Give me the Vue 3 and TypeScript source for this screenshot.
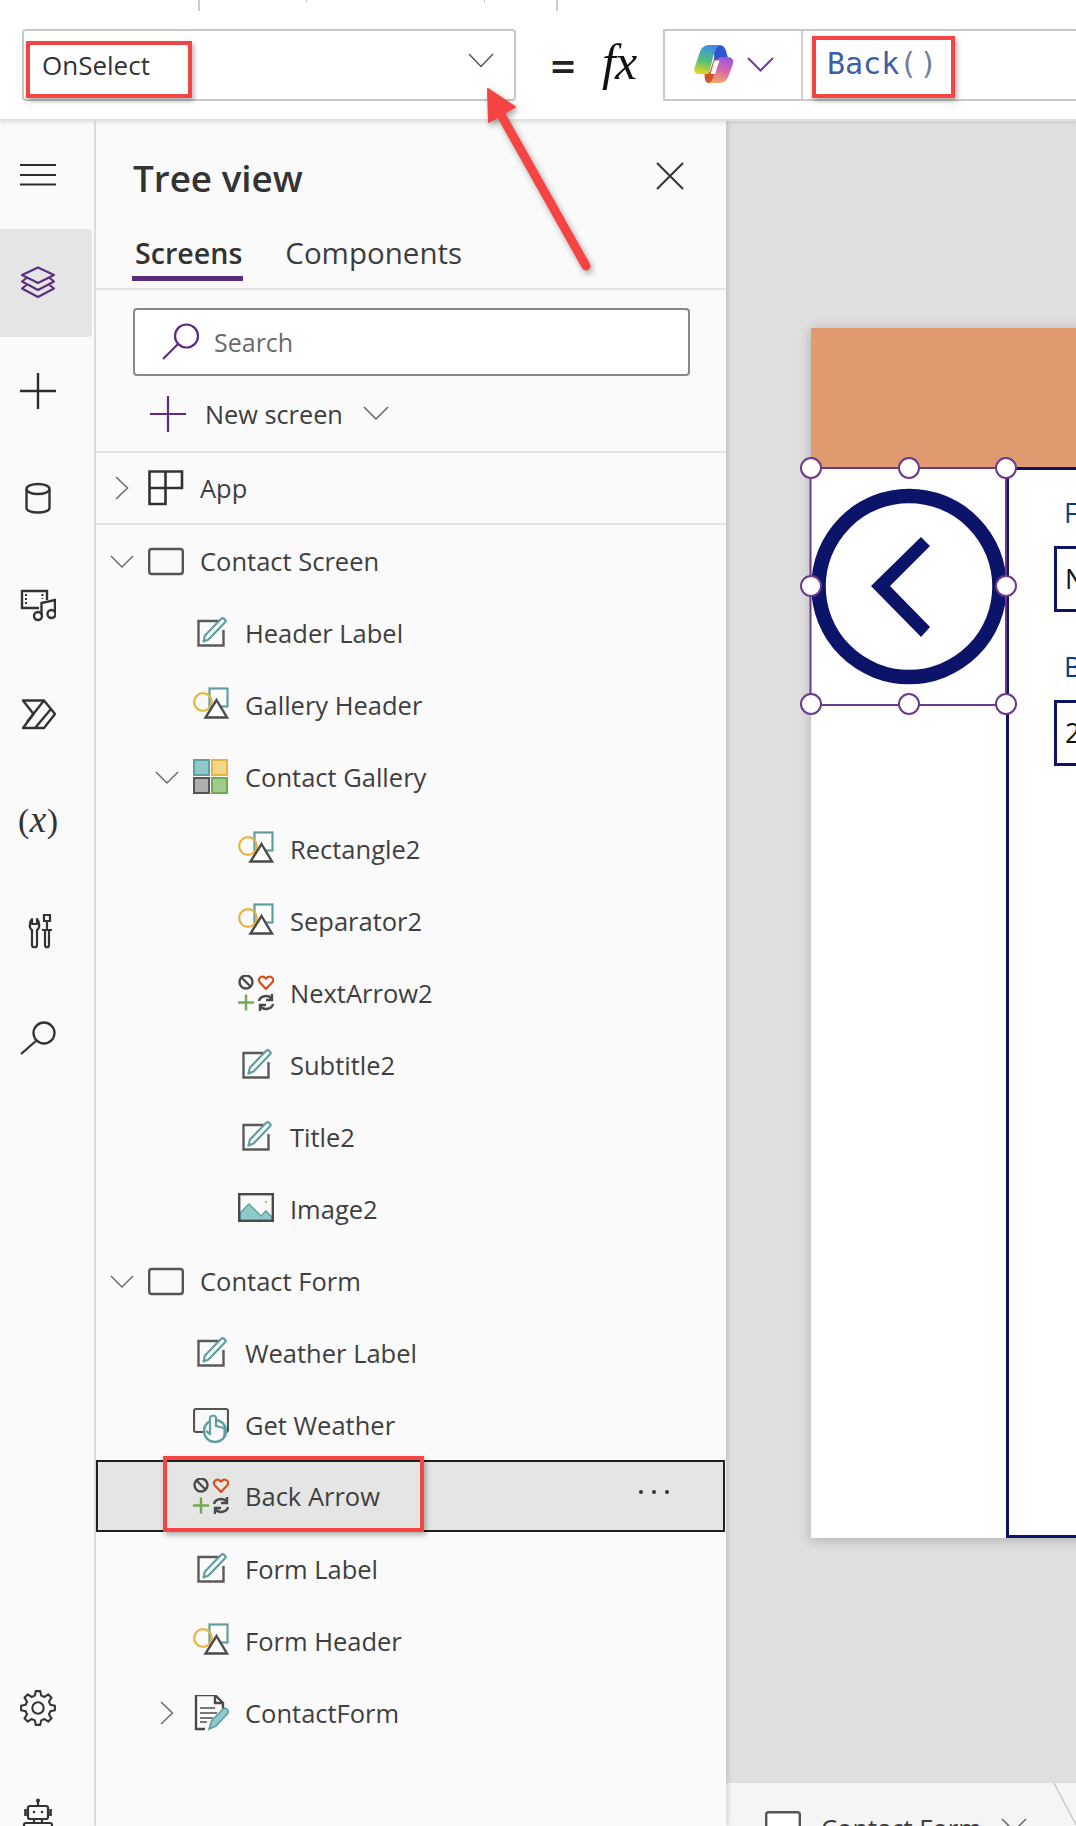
<script setup lang="ts">
type TreeRow = {
  label: string;
  icon: string;
  depth: number;
  chevron?: "down" | "right";
  selected?: boolean;
  boxed?: boolean;
};

const railTop = ["layers", "plus", "db", "media", "flow", "vars", "tools", "find"];

const rows: TreeRow[] = [
  { label: "App", icon: "app", depth: 0, chevron: "right", boxed: true },
  { label: "Contact Screen", icon: "screen", depth: 0, chevron: "down" },
  { label: "Header Label", icon: "label", depth: 1 },
  { label: "Gallery Header", icon: "shapes", depth: 1 },
  { label: "Contact Gallery", icon: "gallery", depth: 1, chevron: "down" },
  { label: "Rectangle2", icon: "shapes", depth: 2 },
  { label: "Separator2", icon: "shapes", depth: 2 },
  { label: "NextArrow2", icon: "mixed", depth: 2 },
  { label: "Subtitle2", icon: "label", depth: 2 },
  { label: "Title2", icon: "label", depth: 2 },
  { label: "Image2", icon: "image", depth: 2 },
  { label: "Contact Form", icon: "screen", depth: 0, chevron: "down" },
  { label: "Weather Label", icon: "label", depth: 1 },
  { label: "Get Weather", icon: "button", depth: 1 },
  { label: "Back Arrow", icon: "mixed", depth: 1, selected: true },
  { label: "Form Label", icon: "label", depth: 1 },
  { label: "Form Header", icon: "shapes", depth: 1 },
  { label: "ContactForm", icon: "form", depth: 1, chevron: "right" },
];

const handles = [
  [11, 11], [109, 11], [206, 11],
  [11, 129], [206, 129],
  [11, 247], [109, 247], [206, 247],
];

function gearPath(cx: number, cy: number, outer: number, inner: number, teeth: number): string {
  const pts: string[] = [];
  const step = (Math.PI * 2) / teeth;
  for (let i = 0; i < teeth; i++) {
    const a = i * step - Math.PI / 2;
    const at = (r: number, d: number) =>
      `${(cx + r * Math.cos(a + d * step)).toFixed(2)} ${(cy + r * Math.sin(a + d * step)).toFixed(2)}`;
    pts.push(at(inner, -0.32), at(outer, -0.17), at(outer, 0.17), at(inner, 0.32));
  }
  return "M" + pts.join("L") + "Z";
}

const gear = gearPath(19, 18, 18, 13.5, 8);
</script>

<template>
  <div class="page">
    <svg class="defs" width="0" height="0" aria-hidden="true">
      <defs>
        <linearGradient id="cpA" x1="0.5" y1="0" x2="0.3" y2="1">
          <stop offset="0" stop-color="#3b8fe6" />
          <stop offset="0.55" stop-color="#55c07a" />
          <stop offset="1" stop-color="#ecd422" />
        </linearGradient>
        <linearGradient id="cpB" x1="0.6" y1="0" x2="0.4" y2="1">
          <stop offset="0" stop-color="#9a55e0" />
          <stop offset="0.5" stop-color="#d868a8" />
          <stop offset="1" stop-color="#f0a868" />
        </linearGradient>

        <symbol id="i-app" viewBox="0 0 36 36">
          <path d="M1.5 1.5H17.5V34H1.5ZM1.5 18H34V1.5H17.5" fill="none" stroke="#333" stroke-width="2.6" />
        </symbol>
        <symbol id="i-screen" viewBox="0 0 36 36">
          <rect x="1.2" y="6" width="33.6" height="25" rx="2.5" fill="none" stroke="#555" stroke-width="2.4" />
        </symbol>
        <symbol id="i-label" viewBox="0 0 36 36">
          <path d="M26 6H5.500V30.500H30.500V15" fill="none" stroke="#5a5a5a" stroke-width="2.4" />
          <path d="M10.500 26.500L12 20.500L28.500 3.500C30 2.300 33.500 5 32.300 7L15.500 24.500Z" fill="#fff" stroke="#5f9f9f" stroke-width="2.2" stroke-linejoin="round" />
        </symbol>
        <symbol id="i-shapes" viewBox="0 0 36 36">
          <rect x="16.500" y="1.500" width="18" height="18" fill="#fff" stroke="#5f9f9f" stroke-width="2.2" />
          <circle cx="10" cy="15" r="8.800" fill="none" stroke="#e8b33e" stroke-width="2.2" />
          <path d="M23.500 13L34 30.500H12.500Z" fill="#fff" stroke="#4a4a4a" stroke-width="2.400" />
        </symbol>
        <symbol id="i-gallery" viewBox="0 0 36 36">
          <rect x="1" y="1" width="15" height="15" fill="#8fcaca" stroke="#5f9f9f" stroke-width="2" />
          <rect x="19" y="1" width="15" height="15" fill="#f2d48a" stroke="#e8b33e" stroke-width="2" />
          <rect x="1" y="19" width="15" height="15" fill="#aeaeae" stroke="#555" stroke-width="2" />
          <rect x="19" y="19" width="15" height="15" fill="#a5cb8c" stroke="#70a950" stroke-width="2" />
        </symbol>
        <symbol id="i-mixed" viewBox="0 0 36 36">
          <circle cx="8" cy="7" r="6.500" fill="none" stroke="#4a4a4a" stroke-width="2.400" />
          <path d="M3.500 2.500L12.500 11.500" stroke="#4a4a4a" stroke-width="2.400" />
          <path d="M28 14L21.500 7C19.500 3.800 23 0.500 26 2L28 3.500L30 2C33 0.500 36.500 3.800 34.500 7Z" fill="none" stroke="#d8501c" stroke-width="2.200" stroke-linejoin="round" />
          <path d="M0 27.500H16M8 19.500V35.500" stroke="#70a950" stroke-width="2.400" />
          <path d="M21 26C22 21 30 19 34 24M34 19V25H28M35 29C34 34 26 36 22 31M22 36V30H28" fill="none" stroke="#4a4a4a" stroke-width="2.400" />
        </symbol>
        <symbol id="i-image" viewBox="0 0 36 36">
          <path d="M2 27V22L11 13L23 25L28 20L34 26V30H2Z" fill="#8fcaca" stroke="#5f9f9f" stroke-width="1.400" />
          <rect x="1.200" y="3.200" width="33.600" height="26.600" fill="none" stroke="#4a4a4a" stroke-width="2.400" />
          <rect x="27" y="10" width="2" height="2" fill="#e8a53e" />
        </symbol>
        <symbol id="i-button" viewBox="0 0 36 36">
          <path d="M10 25H3C2 25 1 24 1 23V4C1 3 2 2 3 2H33C34 2 35 3 35 4V23C35 24 34 25 33 25" fill="none" stroke="#555" stroke-width="2.200" />
          <circle cx="22" cy="24" r="11" fill="#fafafa" stroke="#5f9f9f" stroke-width="2.400" />
          <path d="M13 24L17 27V11C17 8 23 8 23 11V19L31 21C32 24 32 27 31 30" fill="#fafafa" stroke="#5f9f9f" stroke-width="2.200" stroke-linejoin="round" />
        </symbol>
        <symbol id="i-form" viewBox="0 0 36 36">
          <path d="M12 34H3V0H22L30 8V14M22 0V8H30" fill="none" stroke="#4a4a4a" stroke-width="2.400" />
          <path d="M7 13H22M7 18H24M7 23H20M7 27H14" stroke="#777" stroke-width="2" />
          <path d="M16 34L18.500 26L30 14C33 12 36 15 35 18L23 31Z" fill="#8fcaca" stroke="#5f9f9f" stroke-width="1.600" />
        </symbol>

        <symbol id="r-menu" viewBox="0 0 36 36">
          <path d="M0 8H36M0 18H36M0 27.500H36" stroke="#2c2c2c" stroke-width="2" />
        </symbol>
        <symbol id="r-layers" viewBox="0 0 36 36">
          <path d="M18 2.500L34 10L18 18L2 10ZM6.500 13L2 16.500L18 25L34 16.500L29.500 13M6.500 20L2 23.500L18 32L34 23.500L29.500 20" fill="none" stroke="#5c2d7e" stroke-width="2" stroke-linejoin="round" />
        </symbol>
        <symbol id="r-plus" viewBox="0 0 36 36">
          <path d="M0 18H36M18 0V36" stroke="#2c2c2c" stroke-width="2.400" />
        </symbol>
        <symbol id="r-db" viewBox="0 0 36 36">
          <path d="M6.500 8V27C6.500 33 29.500 33 29.500 27V8" fill="none" stroke="#333" stroke-width="2.400" />
          <ellipse cx="18" cy="8" rx="11.500" ry="5" fill="none" stroke="#333" stroke-width="2.400" />
        </symbol>
        <symbol id="r-media" viewBox="0 0 36 36">
          <path d="M19 19H2V2H27V11" fill="none" stroke="#333" stroke-width="2.400" />
          <path d="M6 5V17M22.500 5V10" stroke="#333" stroke-width="2" stroke-dasharray="2 2" />
          <path d="M21.500 26V14L35 11V24" fill="none" stroke="#333" stroke-width="2.400" />
          <circle cx="18" cy="27" r="4" fill="none" stroke="#333" stroke-width="2.400" />
          <circle cx="31.500" cy="25" r="4" fill="none" stroke="#333" stroke-width="2.400" />
        </symbol>
        <symbol id="r-flow" viewBox="0 0 36 36">
          <path d="M3 3.500H24L35 17L24 31H3L13.500 17Z" fill="none" stroke="#333" stroke-width="2.400" stroke-linejoin="round" />
          <path d="M24 3.500L7 25M31 12L15 31" fill="none" stroke="#333" stroke-width="2.400" />
        </symbol>
        <symbol id="r-tools" viewBox="0 0 36 36">
          <path d="M12 17V32C12 35 17 35 17 32V17C20 15 20 9 17 6V11H12V6C9 9 9 15 12 17Z" fill="none" stroke="#333" stroke-width="2.200" stroke-linejoin="round" />
          <path d="M24 2H30V8H24ZM27 8V17M22 17H32M25 17V32C25 35 29 35 29 32V17" fill="none" stroke="#333" stroke-width="2.200" />
        </symbol>
        <symbol id="r-find" viewBox="0 0 36 36">
          <circle cx="24" cy="12" r="10.500" fill="none" stroke="#333" stroke-width="2.300" />
          <path d="M16.500 19.500L1 33" stroke="#333" stroke-width="2.300" />
        </symbol>
        <symbol id="r-bot" viewBox="0 0 36 72">
          <path d="M18 2V8" stroke="#333" stroke-width="2.200" />
          <circle cx="18" cy="2.500" r="2" fill="#333" />
          <rect x="8" y="8" width="20" height="13" rx="2" fill="none" stroke="#333" stroke-width="2.200" />
          <path d="M5.500 11V18M30.500 11V18" stroke="#333" stroke-width="2.600" />
          <circle cx="14" cy="14" r="1.300" fill="#333" />
          <circle cx="22" cy="14" r="1.300" fill="#333" />
          <path d="M14 21V25M22 21V25" stroke="#333" stroke-width="2.200" />
          <rect x="4" y="25" width="28" height="20" rx="2" fill="none" stroke="#333" stroke-width="2.200" />
        </symbol>
      </defs>
    </svg>

    <div class="strip">
      <i class="tick tall t1"></i>
      <i class="tick t2"></i>
      <i class="tick t3"></i>
      <i class="tick tall t4"></i>
    </div>

    <header class="bar">
      <div class="prop-select">
        <span class="prop-name">OnSelect</span>
        <svg class="prop-chev" width="26" height="15" viewBox="0 0 26 15">
          <path d="M1 1L13 13.500L25 1" fill="none" stroke="#555" stroke-width="1.500" />
        </svg>
      </div>
      <span class="equals">=</span>
      <span class="fx">fx</span>
      <div class="formula">
        <div class="copilot">
          <svg width="41" height="40" viewBox="0 0 40 40">
            <path d="M11 30C14 30 16 29 17 26L21 13H30L25 30C24 36 20 39 15 39C12 39 11 35 11 30Z" fill="#d2542c" />
            <path d="M16 1H26C23 2 21.500 5 20.500 9L16.500 26C15.500 29 14 30 11 30H5C1.500 30 0 27 1 24L6 9C8 3.500 11 1 16 1Z" fill="url(#cpA)" />
            <path d="M26 1C29 1 31.500 3 32.500 7L34.500 14H27C24 14 22 15 21 17L20.500 9C21.500 5 23 2 26 1Z" fill="#2c58cf" />
            <path d="M27 13H34C38.500 13 40.500 16 39.500 20L35 32C33 37 30 39 25 39H15C18 38 19.500 35 20.500 31L23.500 18C24 15 25 13 27 13Z" fill="url(#cpB)" />
            <path d="M21 16.500H26L21.500 30H17Z" fill="#fff" />
          </svg>
          <svg width="27" height="15" viewBox="0 0 27 15">
            <path d="M1 1L13.500 13.500L26 1" fill="none" stroke="#7a3a9a" stroke-width="2" />
          </svg>
        </div>
        <div class="code">Back<span class="paren">()</span></div>
      </div>
    </header>

    <div class="body">
      <nav class="rail">
        <div class="rail-item">
          <svg class="rail-icon"><use href="#r-menu" /></svg>
        </div>
        <div v-for="item in railTop" :key="item" class="rail-item" :class="{ active: item === 'layers' }">
          <span v-if="item === 'vars'" class="vars">(<em>x</em>)</span>
          <svg v-else class="rail-icon"><use :href="`#r-${item}`" /></svg>
        </div>
        <div class="rail-bottom">
          <div class="rail-item">
            <svg class="rail-icon" viewBox="0 0 38 36">
              <path :d="gear" fill="none" stroke="#333" stroke-width="2.200" stroke-linejoin="round" />
              <circle cx="19" cy="18" r="6" fill="none" stroke="#333" stroke-width="2.200" />
            </svg>
          </div>
          <div class="rail-item bot">
            <svg class="rail-icon bot-icon"><use href="#r-bot" /></svg>
          </div>
        </div>
      </nav>

      <aside class="panel">
        <div class="panel-head">
          <h1 class="title">Tree view</h1>
          <svg width="28" height="28" viewBox="0 0 28 28">
            <path d="M1 1L27 27M27 1L1 27" stroke="#333" stroke-width="2" />
          </svg>
        </div>
        <div class="tabs">
          <span class="tab on">Screens</span>
          <span class="tab">Components</span>
        </div>
        <div class="search-wrap">
          <div class="search">
            <svg width="38" height="38" viewBox="0 0 38 38">
              <circle cx="24.500" cy="13" r="11.500" fill="none" stroke="#5c2d7e" stroke-width="2.200" />
              <path d="M16 21L1 36" stroke="#5c2d7e" stroke-width="2.200" />
            </svg>
            <span>Search</span>
          </div>
        </div>
        <div class="new-screen">
          <svg width="36" height="36" viewBox="0 0 36 36">
            <path d="M0 18H36M18 0V36" stroke="#5c2d7e" stroke-width="2.200" />
          </svg>
          <span>New screen</span>
          <svg width="26" height="14" viewBox="0 0 26 14">
            <path d="M1 1L13 13L25 1" fill="none" stroke="#666" stroke-width="1.500" />
          </svg>
        </div>

        <div
          v-for="row in rows"
          :key="row.label"
          class="row"
          :class="[`depth-${row.depth}`, { selected: row.selected, boxed: row.boxed }]"
        >
          <span class="chev">
            <svg v-if="row.chevron === 'down'" width="24" height="13" viewBox="0 0 24 13">
              <path d="M1 1L12 12L23 1" fill="none" stroke="#666" stroke-width="1.400" />
            </svg>
            <svg v-else-if="row.chevron === 'right'" width="14" height="24" viewBox="0 0 14 24">
              <path d="M1 1L12.500 12L1 23" fill="none" stroke="#666" stroke-width="1.400" />
            </svg>
          </span>
          <svg class="row-icon"><use :href="`#i-${row.icon}`" /></svg>
          <span class="row-label">{{ row.label }}</span>
          <svg v-if="row.selected" class="more" width="34" height="6" viewBox="0 0 34 6">
            <circle cx="4" cy="3" r="2" fill="#333" />
            <circle cx="17" cy="3" r="2" fill="#333" />
            <circle cx="30" cy="3" r="2" fill="#333" />
          </svg>
        </div>
      </aside>

      <main class="canvas">
        <div class="stage">
          <div class="artboard">
            <div class="art-header"></div>
            <div class="art-main">
              <div class="art-left"></div>
              <div class="art-form">
                <div class="field">
                  <span class="field-label">F</span>
                  <div class="field-input">N</div>
                </div>
                <div class="field">
                  <span class="field-label">B</span>
                  <div class="field-input">2</div>
                </div>
              </div>
            </div>

            <svg class="selection" width="218" height="260" viewBox="0 0 218 260">
              <circle cx="109" cy="129.500" r="90.500" fill="none" stroke="#0b1468" stroke-width="14.500" />
              <path d="M71 129L121 80L130 89L90 129L130 170L121 180Z" fill="#0b1468" />
              <rect x="10.500" y="11" width="195.500" height="237" fill="none" stroke="#6b3a8a" stroke-width="2" />
              <circle
                v-for="(h, i) in handles"
                :key="i"
                :cx="h[0]"
                :cy="h[1]"
                r="10"
                fill="#fff"
                stroke="#6b3a8a"
                stroke-width="2"
              />
            </svg>
          </div>
        </div>
        <div class="tabbar">
          <svg class="tab-icon" width="36" height="30" viewBox="0 0 36 30">
            <rect x="1.200" y="1.200" width="33.600" height="27" rx="2.500" fill="#fff" stroke="#555" stroke-width="2.400" />
          </svg>
          <span class="tab-name">Contact Form</span>
          <svg class="tab-chev" width="26" height="14" viewBox="0 0 26 14">
            <path d="M1 1L13 13L25 1" fill="none" stroke="#666" stroke-width="1.500" />
          </svg>
          <svg class="tab-edge" width="24" height="44" viewBox="0 0 24 44">
            <path d="M1 0L23 42" stroke="#c8c8c8" stroke-width="1.500" />
          </svg>
        </div>
      </main>
    </div>

    <!-- callouts drawn over the screenshot -->
    <div class="callout c-prop"></div>
    <div class="callout c-code"></div>
    <div class="callout c-row"></div>
    <svg class="arrow" width="160" height="220" viewBox="0 0 160 220">
      <path d="M28 9L55 27L29 42Z" fill="#f44444" stroke="#f44444" stroke-width="2" stroke-linejoin="round" />
      <path d="M40 33L126 186" stroke="#f44444" stroke-width="9" stroke-linecap="round" />
    </svg>
  </div>
</template>

<style>
html,
body {
  margin: 0;
  background: #fff;
}
</style>

<style scoped>
.page {
  position: relative;
  width: 1076px;
  height: 1826px;
  overflow: hidden;
  font-family: "Open Sans", "Noto Sans", sans-serif;
  color: #3d3d3d;
  background: #fff;
}

.defs {
  position: absolute;
}

.strip {
  height: 29px;
  display: flex;
  align-items: flex-start;
}

.tick {
  display: block;
  width: 1px;
  height: 2px;
  background: #bbb;
  flex: none;
}
.tick.tall {
  width: 2px;
  height: 11px;
  background: #ccc;
}
.t1 { margin-left: 198px; }
.t2 { margin-left: 106px; }
.t3 { margin-left: 177px; }
.t4 { margin-left: 71px; }

.bar {
  height: 90px;
  display: flex;
  align-items: flex-start;
  border-bottom: 2px solid #e2e2e2;
  position: relative;
  z-index: 2;
  box-shadow: 0 2px 3px rgba(0, 0, 0, 0.08);
  background: #fff;
}

.prop-select {
  box-sizing: border-box;
  margin-left: 22px;
  width: 494px;
  height: 72px;
  border: 2px solid #c8c8c8;
  border-radius: 4px;
  display: flex;
  align-items: center;
  justify-content: space-between;
  padding: 0 20px 0 18px;
  flex: none;
}

.prop-name {
  font-size: 26px;
  color: #333;
}

.prop-chev {
  margin-bottom: 9px;
}

.equals {
  width: 26px;
  margin-left: 34px;
  margin-top: 8px;
  font-size: 44px;
  line-height: 56px;
  font-weight: 600;
  color: #222;
  text-align: center;
  flex: none;
}

.fx {
  width: 61px;
  margin-left: 26px;
  margin-top: 7px;
  font-family: "Liberation Serif", serif;
  font-style: italic;
  font-size: 50px;
  line-height: 52px;
  letter-spacing: -1px;
  color: #111;
  flex: none;
}

.formula {
  box-sizing: border-box;
  flex: 1;
  height: 72px;
  border: 2px solid #c8c8c8;
  border-right: 0;
  display: flex;
}

.copilot {
  box-sizing: border-box;
  width: 138px;
  border-right: 2px solid #d0d0d0;
  display: flex;
  align-items: center;
  padding-left: 28px;
  padding-bottom: 2px;
  gap: 13px;
}

.code {
  margin-left: 24px;
  font-family: "DejaVu Sans Mono", monospace;
  font-size: 30px;
  line-height: 66px;
  color: #3f5da5;
}

.paren {
  color: #6f82a0;
  letter-spacing: 2px;
}

.body {
  display: flex;
  height: 1705px;
}

.rail {
  width: 94px;
  border-right: 2px solid #e0e0e0;
  background: #fafafa;
  display: flex;
  flex-direction: column;
  flex: none;
}

.rail-item {
  height: 108px;
  flex: none;
  display: flex;
  align-items: center;
  padding-left: 20px;
  margin-right: 2px;
  border-radius: 0 4px 4px 0;
}
.rail-item.active {
  background: #e5e5e5;
}

.rail-icon {
  width: 36px;
  height: 36px;
  overflow: visible;
}

.bot-icon {
  height: 72px;
  margin-top: 36px;
}

.vars {
  font-family: "Liberation Serif", serif;
  font-size: 34px;
  color: #333;
  letter-spacing: 0.5px;
  margin-left: -2px;
  margin-top: -8px;
}
.vars em {
  font-size: 37px;
}

.rail-bottom {
  margin-top: auto;
  margin-bottom: -44px;
}

.panel {
  width: 630px;
  flex: none;
  background: #fafafa;
  position: relative;
  z-index: 1;
  box-shadow: 2px 0 5px rgba(0, 0, 0, 0.14);
}

.panel-head {
  height: 92px;
  padding: 28px 42px 0 37px;
  box-sizing: border-box;
  display: flex;
  align-items: flex-start;
  justify-content: space-between;
}

.title {
  margin: 0;
  font-size: 36.8px;
  line-height: 58px;
  font-weight: 600;
  color: #333;
}

.panel-head svg {
  margin-top: 13px;
}

.tabs {
  height: 77px;
  box-sizing: border-box;
  border-bottom: 2px solid #e4e4e4;
  display: flex;
  gap: 42px;
  padding-left: 36px;
}

.tab {
  height: 63px;
  line-height: 80px;
  font-size: 29.5px;
  color: #3d3d3d;
}
.tab.on {
  box-sizing: content-box;
  font-size: 28.6px;
  font-weight: 600;
  border-bottom: 5px solid #5c2d7e;
  color: #333;
  padding: 0 1px 0 3px;
}

.search-wrap {
  padding: 18px 36px 0 37px;
}

.search {
  box-sizing: border-box;
  height: 68px;
  background: #fff;
  border: 2px solid #888;
  border-radius: 4px;
  display: flex;
  align-items: center;
  padding-left: 27px;
  gap: 14px;
  font-size: 25px;
  color: #6a6a6a;
}

.new-screen {
  height: 75px;
  box-sizing: border-box;
  display: flex;
  align-items: center;
  padding-left: 54px;
  padding-top: 1px;
  font-size: 25.3px;
  color: #3d3d3d;
}
.new-screen span {
  margin-left: 19px;
  margin-right: 20px;
}
.new-screen svg:last-child {
  margin-bottom: 2px;
}

.row {
  box-sizing: border-box;
  height: 72px;
  display: flex;
  align-items: center;
  font-size: 25.5px;
  color: #3f3f3f;
}
.row.boxed {
  height: 74px;
  border-top: 2px solid #e4e4e4;
  border-bottom: 2px solid #e4e4e4;
}
.row.depth-0 { padding-left: 8px; }
.row.depth-1 { padding-left: 53px; }
.row.depth-2 { padding-left: 98px; }
.row.selected {
  background: #e5e5e5;
  border: 2px solid #1f1f1f;
  padding-left: 51px;
  margin: -1px 1px 1px 0;
}

.chev {
  width: 36px;
  display: flex;
  justify-content: center;
  flex: none;
}

.row-icon {
  width: 36px;
  height: 36px;
  margin-left: 8px;
  margin-right: 16px;
  flex: none;
  overflow: visible;
}

.more {
  margin-left: auto;
  margin-right: 52px;
  margin-top: -8px;
}

.canvas {
  flex: 1;
  min-width: 0;
  display: flex;
  flex-direction: column;
  background: #dfdfdf;
  overflow: hidden;
}

.stage {
  flex: 1;
  padding: 207px 0 0 85px;
  min-height: 0;
}

.artboard {
  position: relative;
  width: 800px;
  height: 1210px;
  background: #fff;
  box-shadow: 0 2px 12px rgba(0, 0, 0, 0.22);
  display: flex;
  flex-direction: column;
}

.art-header {
  height: 139px;
  background: #e09a70;
  flex: none;
}

.art-main {
  flex: 1;
  display: flex;
}

.art-left {
  width: 195px;
  flex: none;
}

.art-form {
  flex: 1;
  box-sizing: border-box;
  border: 3px solid #0b1468;
  border-right: 0;
  padding: 24px 0 0 45px;
}

.field {
  margin-bottom: 36px;
}

.field-label {
  display: block;
  font-size: 27px;
  line-height: 38px;
  color: #0b3a8a;
  padding-left: 10px;
}

.field-input {
  box-sizing: border-box;
  margin-top: 14px;
  height: 66px;
  border: 3px solid #0b1468;
  padding-left: 8px;
  font-size: 27px;
  line-height: 60px;
  color: #111;
}

.selection {
  position: absolute;
  left: -11px;
  top: 129px;
  overflow: visible;
}

.tabbar {
  position: relative;
  height: 43px;
  flex: none;
  background: #f5f5f5;
  display: flex;
  align-items: flex-start;
  padding-left: 39px;
  box-sizing: border-box;
}

.tab-icon {
  margin-top: 28px;
  flex: none;
}

.tab-name {
  margin-left: 20px;
  margin-top: 29px;
  font-size: 25.5px;
  line-height: 32px;
  white-space: nowrap;
  color: #3d3d3d;
}

.tab-chev {
  margin-left: 19px;
  margin-top: 35px;
  flex: none;
}

.tab-edge {
  position: absolute;
  left: 327px;
  top: 0;
}

.callout {
  position: absolute;
  z-index: 5;
  box-sizing: border-box;
  border: 4px solid #f44444;
  box-shadow: 2px 3px 5px rgba(0, 0, 0, 0.3);
}
.c-prop {
  left: 26px;
  top: 41px;
  width: 166px;
  height: 57px;
}
.c-code {
  left: 812px;
  top: 36px;
  width: 143px;
  height: 62px;
}
.c-row {
  left: 163px;
  top: 1456px;
  width: 261px;
  height: 76px;
}

.arrow {
  position: absolute;
  z-index: 5;
  left: 460px;
  top: 80px;
  filter: drop-shadow(2px 3px 3px rgba(0, 0, 0, 0.35));
}
</style>
